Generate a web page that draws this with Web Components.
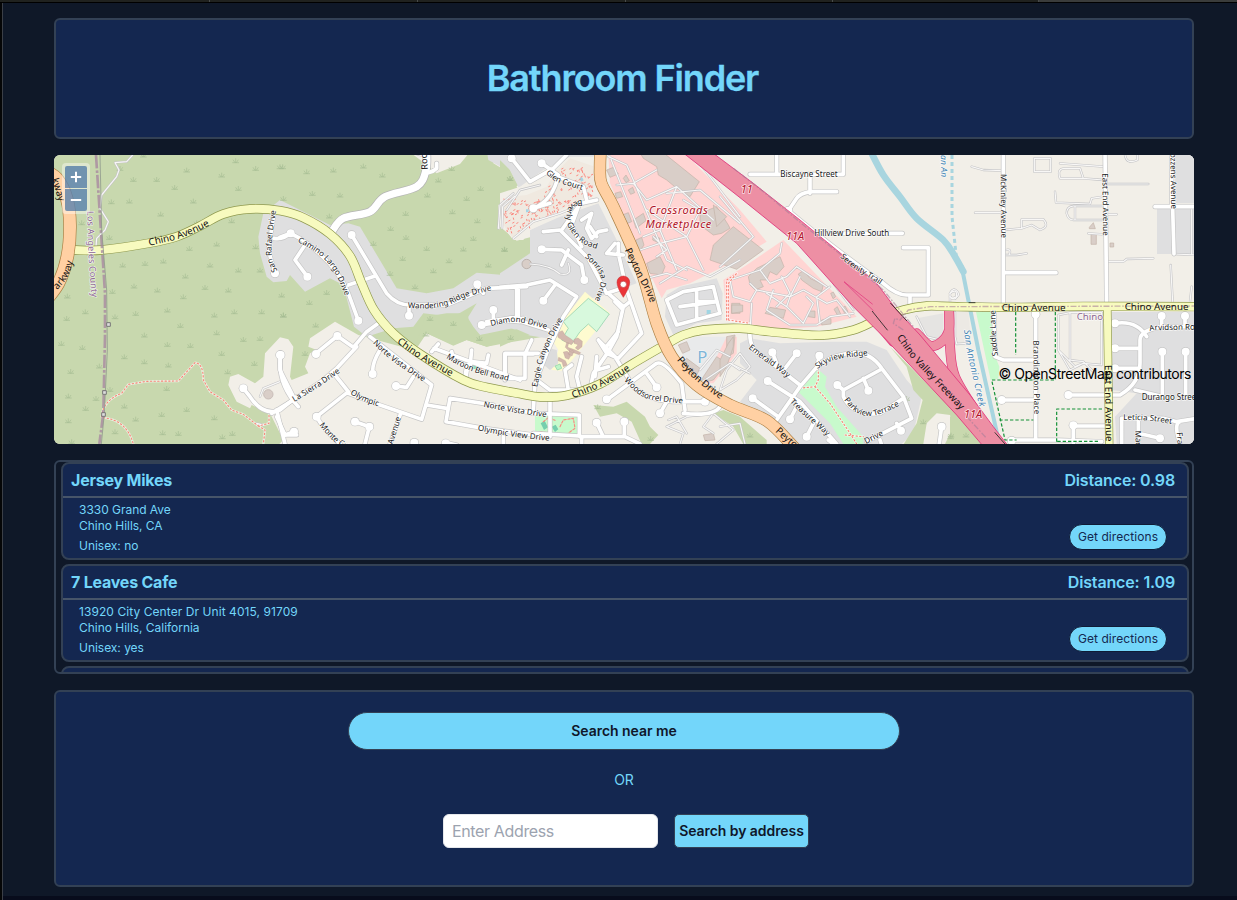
<!DOCTYPE html>
<html lang="en">
<head>
<meta charset="utf-8">
<title>Bathroom Finder</title>
<style>
  html, body { margin: 0; height: 100%; overflow: hidden; }
  body { background: #0f1828; font-family: Inter, sans-serif; color: #73d6fa; }
</style>
</head>
<body>
<finder-app></finder-app>
<script>
const define = (name, html, setup) => customElements.define(name, class extends HTMLElement {
  connectedCallback() {
    if (this.shadowRoot) return;
    const root = this.attachShadow({ mode: 'open' });
    const t = document.createElement('template');
    t.innerHTML = html;
    root.append(t.content.cloneNode(true));
    if (setup) setup(this, root);
  }
});

define('window-frame', `
  <style>
    :host { display: grid; grid-template: 2px 1px 1fr 4px / 2px 1px 1fr; height: 900px; background: #0f1828; }
    .tabs { grid-area: 1/1/2/4; display: grid; grid-template-columns: 210px 208px 208px 207px 206px 1fr; background: #20221f; }
    .tabs i { border-right: 1px solid #484b4a; }
    .tabs i:last-child { background: #3a3c3b; border: 0; }
    .rule { grid-area: 2/1/3/4; background: #000; }
    .left { grid-area: 3/1/5/2; background: #050607; }
    .edge { grid-area: 3/2/5/3; background: #3b3f47; }
    main { grid-area: 3/3/4/4; min-width: 0; }
    .foot { grid-area: 4/3/5/4; background: #080c1c; }
  </style>
  <div class="tabs"><i></i><i></i><i></i><i></i><i></i><i></i></div>
  <div class="rule"></div><div class="left"></div><div class="edge"></div>
  <main><slot></slot></main><div class="foot"></div>`);

define('panel-box', `
  <style>
    :host { display: flex; flex-direction: column; align-items: center; box-sizing: border-box;
      background: #142750; border: 2px solid #334155; border-radius: 6px; }
  </style><slot></slot>`);

define('pill-button', `
  <style>
    :host { display: inline-flex; }
    button { all: unset; box-sizing: border-box; flex: 1; display: flex; align-items: center; justify-content: center;
      background: #73d6fa; color: var(--ink, #0f172a); border: 1px solid var(--line, #334155); border-radius: var(--radius, 18px);
      font: var(--font, 600 14px/20px Inter, sans-serif); letter-spacing: var(--track, 0); white-space: nowrap; }
  </style><button><slot></slot></button>`);

define('place-card', `
  <style>
    :host { display: flex; flex-direction: column; box-sizing: border-box; height: 98px; flex: none;
      border: 2px solid #334155; border-radius: 8px; background: #142750; }
    header { display: flex; justify-content: space-between; height: 32px; padding: 0 12px 0 8px; border-bottom: 2px solid #475569;
      font: 700 16px/33px Inter, sans-serif; letter-spacing: -.22px; }
    header ::slotted([slot=distance]) { font-weight: 600; letter-spacing: -.15px; }
    .body { display: flex; justify-content: space-between; align-items: flex-end; padding: 4px 20px 0 16px; font-size: 12px; line-height: 16px; letter-spacing: -.03px; }
    .unisex { margin-top: 4px; }
    pill-button { width: 98px; height: 26px; margin-bottom: 4px; --ink: #142750; --line: #0f1b36; --radius: 13px; --font: 400 12px/16px Inter, sans-serif; --track: .08px; }
  </style>
  <header><slot name="name"></slot><slot name="distance"></slot></header>
  <div class="body">
    <div><div><slot name="street"></slot></div><div><slot name="city"></slot></div><div class="unisex">Unisex: <slot name="unisex"></slot></div></div>
    <pill-button>Get directions</pill-button>
  </div>`);

define('result-list', `
  <style>
    :host { display: flex; flex-direction: column; gap: 4px; box-sizing: border-box; height: 214px; overflow: hidden;
      padding: 0 3px 0 5px; border: 2px solid #334155; border-radius: 6px; }
  </style><slot></slot>`);

define('search-form', `
  <style>
    :host { display: flex; flex-direction: column; align-items: center; padding-top: 20px; width: 100%; }
    .near { width: 552px; height: 38px; --radius: 19px; --track: -.05px; }
    .or { font-size: 14px; line-height: 20px; margin: 20px 0 24px; }
    .row { display: flex; align-items: center; gap: 16px; margin-left: 4px; }
    input { box-sizing: border-box; width: 215px; height: 34px; margin: 0; padding: 0 8px; background: #fff; border: 1px solid #e5e7eb;
      border-radius: 6px; font: 400 16px/24px Inter, sans-serif; letter-spacing: -.36px; outline: 0; }
    input::placeholder { color: #9ca3af; opacity: 1; }
    .by { width: 135px; height: 34px; --radius: 5px; --track: -.06px; }
  </style>
  <pill-button class="near">Search near me</pill-button>
  <div class="or">OR</div>
  <div class="row"><input placeholder="Enter Address"><pill-button class="by">Search by address</pill-button></div>`);

/* ---------- map drawing: units are thirds of a pixel, grouped by tile column ---------- */
const TILE = { A: 0, B: 690, C: 1350, D: 2010, E: 2700 };
const smooth = str => {
  const p = str.trim().split(/\s+/).map(s => s.split(',').map(Number));
  let d = `M${p[0]}`;
  for (let i = 0; i < p.length - 1; i++) {
    const a = p[i - 1] || p[i], b = p[i], c = p[i + 1], e = p[i + 2] || c;
    d += `C${b[0] + (c[0] - a[0]) / 6},${b[1] + (c[1] - a[1]) / 6} ${c[0] - (e[0] - b[0]) / 6},${c[1] - (e[1] - b[1]) / 6} ${c}`;
  }
  return d;
};
const at = (t, s) => `<g transform="translate(${TILE[t]} 0)">${s}</g>`;
const each = (data, fn) => Object.entries(data).map(([t, v]) => at(t, fn(v))).join('');

const land = {
  A: `<path class="green" d="M0,0H2000V900H0Z"/>`,
  B: `<path class="base" d="M380,0L408,20 432,38 470,70 540,42 560,18 570,0H3000V900H-20L10,870 0,850 -30,790 -85,765 -90,775 -130,755 -155,705 -150,680 -125,672 -75,700 -50,680 -45,610 0,562 25,568 40,590 30,680 35,690 85,670 75,650 90,610 110,600 85,590 90,565 165,515 235,555 400,600 440,550 520,585 560,570 620,590 720,560 760,300 720,290 655,235 655,165 720,130 690,70 640,40V0Z"/>
     <path class="grey" d="M-50,190L-65,260 -60,310 -40,380 -20,397 20,393 30,375 75,425 150,385 190,405 222,530 260,560 340,535 400,530 430,490 520,500 590,460 565,500 565,525 600,555 660,550 720,540 900,400 900,200 820,260 720,340 670,375 590,368 520,415 440,430 350,415 240,230 205,220 150,225 0,150Z"/>
     <path class="green" d="M400,610L435,500 500,490 555,490 580,530 600,555 720,530 790,560 700,575 620,590 560,570 520,587 440,550Z"/>
     <path class="grey" d="M620,0L625,30 690,65 720,120 760,110 940,20 960,0Z"/>`,
  C: `<path class="green" d="M0,30L30,60 55,105 0,140ZM0,230L50,272 90,262 90,310 0,375Z"/>
     <path class="grey" d="M-30,15L20,40 55,110 200,40 215,0H-30ZM90,240L170,200 295,160 350,270 410,400 300,440 240,450 210,500 140,565 80,555 0,520V370L90,310Z"/>
     <path class="base" d="M60,110L130,60 210,20 290,20 295,160 180,200 90,240 70,270 40,270 0,220V130Z"/>
     <path class="park" d="M5,180L30,140 80,135 140,110 165,70 210,25 285,50 285,110 260,140 170,185 90,215 40,265 10,225Z" style="fill:#f0e9e0"/>
     <path class="retail" d="M325,15H560L720,180 800,275 700,335 570,400 500,420 485,445 440,350 400,260 330,100Z"/>
     <path class="retail" d="M670,390L740,345 850,270 1070,500 950,530 810,540 730,515 680,510Z"/>
     <path class="grey" d="M500,435L540,410 650,385 668,430 665,510 590,520 520,555 495,500Z"/>
     <path d="M540,580L590,560 680,560 690,640 620,705 555,640Z" fill="#e9eaeb"/>
     <path class="retail" d="M680,560L710,560 710,610 680,650 640,700 610,700Z"/>
     <path d="M255,425L330,490 285,545 200,650 185,662 155,660 175,600 150,560Z" fill="#fefbd0"/>
     <path d="M265,445L328,492 290,545 265,522 240,545 215,582 185,570 205,535 190,515Z" fill="#d8f9dd" stroke="#86cca6" stroke-width="2"/>
     <path class="green" d="M0,545L50,538 90,555 50,568 0,590ZM280,765L340,770 380,755 435,800 450,830 475,855 450,882H425L395,815 350,790 300,800ZM640,790L670,780 720,800 800,870V900H740L700,830Z"/>
     <path d="M105,798H235V858H105Z" fill="#c8facc"/><path d="M130,590L170,600 175,640 150,660 125,640Z" fill="#dcdcdc"/>
     <path d="M165,648L180,642 185,655 172,660Z" fill="#c0f5c8" stroke="#86cca6" stroke-width="2"/>`,
  D: `<path class="grey" d="M60,580L90,565 180,580 330,575 440,575 500,600 560,690 605,740 580,850 545,882H235L60,755 110,690 60,640Z"/>
     <path class="green" d="M510,590L560,640 720,800 740,820 760,900H540L590,820 608,750 580,720 560,650ZM60,830L110,850 120,882H80Z"/>
     <path class="base" d="M610,882L620,820 650,790 690,795 700,830 675,882Z"/>
     <path class="park" d="M290,655L320,680 315,710 350,770 430,860V882H370L330,820 235,725Z"/>
     <path d="M590,505L670,490V560L640,570 610,560Z" fill="#e5e4e2"/>`,
  E: `<path class="park" d="M78,486H125L132,610 148,650 145,686 122,690Z"/>
     <path class="grey" d="M675,0H740V160H675ZM621,175H740V312H621ZM485,486H740V882H500L495,800 560,730 485,720Z"/>
     <path class="green" d="M0,800L30,790 95,882H0Z"/><path class="grey" d="M0,486H55L62,560 50,586H15Z" style="fill:#ece9e4"/>`
};
const tufts = {
  A: '280,15 210,55 250,88 320,88 410,60 515,75 557,32 617,55 690,50 374,112 565,115 430,153 238,153 184,155 332,192 545,212 440,218 178,262 95,218 418,295 500,282 617,290 340,333 285,340 218,345 406,378 480,345 565,360 630,360 252,408 187,424 322,420 400,440 465,412 535,420 52,438 106,485 50,505 352,480 195,500 257,490 493,495 553,485 635,485 700,495 391,526 283,555 500,548 580,568 630,565 352,583 421,586 515,610 34,580 97,592 223,620 62,664 148,648 283,635 613,640 533,665 355,645 180,718 55,738 107,775 223,768 350,715 138,745 410,778 335,793 493,803 55,812 257,807 195,845 385,850 547,850 338,848 65,875 517,860',
  B: '8,50 80,65 160,60 250,48 307,75 515,55 475,90 602,115 560,145 442,135 97,130 180,135 377,190 517,185 148,198 592,212 332,235 378,262 280,280 440,295 550,297 580,265 673,297 368,325 507,332 460,362 625,345 405,410 330,370 10,145 5,435 88,457 140,427 10,495 107,525 75,610 438,552 520,520 598,565 690,85 450,505',
  C: '14,298 30,85 32,562 293,770 452,865', D: '610,815 692,860 560,745 90,855', E: '3,855 48,855'
};
const buildings = {
  C: 'M415,0L480,0 598,95 570,140 530,115 500,90 475,75 470,50 430,25ZM320,60L340,52 355,72 330,82ZM345,130L362,125 368,140 350,145ZM370,85L378,75 388,92 378,98ZM385,120L398,112 404,128 392,133ZM367,195L385,188 395,215 378,222ZM400,210L430,190 438,212 408,235ZM460,258L480,265 475,278 458,270ZM600,190L650,170 685,225 690,235 665,250 640,255 600,225ZM640,285L700,230 790,300 710,358 630,330ZM440,340L480,320 495,350 485,375 450,370ZM408,270L425,262 432,285 415,310 405,300ZM535,585L560,575 570,600 548,610ZM545,640L560,625 600,655 590,675ZM680,560L705,555 700,610 680,620ZM630,650L650,620 680,640 640,690 600,700 610,680ZM695,460H720V490H695ZM610,855L640,850 645,870 615,872Z',
  D: 'M-20,165L20,200 -10,230ZM85,380L110,355 150,335 180,320 192,350 170,375 150,365 140,390 120,390 130,410 105,420 90,405ZM235,372L250,362 270,385 310,405 305,425 280,415 245,390ZM135,490L150,472 197,480 190,505ZM35,465H68V485L35,490ZM265,483H285V503L265,500ZM305,510L333,506V522L305,525ZM332,430L340,426 347,440 339,446ZM342,478L352,470 362,492 354,498ZM366,475L375,468 384,485 374,490ZM0,630L25,580 40,560V590L20,650 0,680Z',
  E: 'M418,232L430,218 436,236H418ZM423,253H439V283H423ZM480,279H491V291H480Z'
};
const school = 'M172,548L187,542 196,556 212,566 222,574 214,584 196,576 174,562ZM222,568L234,564 247,574 246,590 234,600 226,594 234,584 222,580ZM200,578L206,578 203,592 226,600 242,608 238,614 208,604 196,592ZM210,598L222,604 216,618 204,612ZM190,606L202,604 212,618 206,628 196,624ZM176,622L196,632 202,646 190,650 186,636 174,632Z';
const service = {
  A: 'M248,15L230,35 195,38 207,60 200,80 155,135 150,175 175,215 165,240 140,265 138,290M620,820L640,825',
  B: 'M0,695L-50,715 -60,740M655,235L660,165 700,130M666,235L668,170 705,138',
  C: 'M90,342Q150,345 180,372Q220,380 205,340M325,20L380,45 400,90 500,330 560,360M350,105L400,100 440,150 530,110 640,210M470,60L400,100M530,110L480,240 530,360M600,40L720,200M440,180L560,260 600,180 550,150M420,300L480,280 560,260 610,360M480,240L430,260M500,130L600,120 720,220M420,390L500,370 560,390M480,400L560,350 630,380 720,330M460,260L500,300 470,320M500,830L560,800 640,790 700,840 650,882M540,882L550,850 500,830M600,700L690,640 720,660M640,790L610,830 640,850M600,660L650,600 690,620M505,810L530,800 560,850M650,60L740,150M330,20L420,250M20,180L60,120 120,105M40,265L100,215 180,190 255,160',
  D: 'M0,140L100,260 0,350M30,390L120,360 180,310 185,280M30,390L40,440 90,455 110,420 90,400M110,420L210,440 250,420 320,460 350,450M120,360L150,400 200,380 230,350 320,410M200,470L210,440 240,380M200,470L250,520 280,460 260,440M160,420L140,480 210,525H290L330,500 400,490M90,545L95,460M350,450L390,500M300,520L290,440 330,410M340,400L400,480M200,470L140,430M0,720L50,690 90,650 60,610 20,660ZM30,640L90,670M0,830L60,820 75,882M185,380L210,430 170,470M690,460L690,430Q700,410 712,425T695,445M590,500L620,560 660,570',
  E: 'M65,50L100,60 155,62M75,188H155M165,240L215,235V208L280,208Q300,230 270,240L245,225 215,235M165,315H200L230,310M168,300Q185,295 178,315M253,25H302V65H253ZM330,40L460,50M330,85Q320,55 345,55L390,55 400,85 460,90M330,85H400M475,102H595M315,125L318,158 420,162 425,145 460,140M350,190Q350,170 370,168H460M350,190Q355,210 370,210H460M375,168V210M475,193H500M415,250L460,253M475,335L520,335 530,327 610,325M662,345L668,455M725,410L720,455M670,312L740,315M725,175V312M325,495L360,488H455V645L400,640 375,650 325,600ZM360,488V630M325,600L360,660 400,640M525,15Q530,45 562,30V0M0,430Q20,415 20,435T0,440M15,486V560L20,582 50,580M355,630L400,635 430,665M0,700V560'
};
const roads = {
  A: 'M675,370L655,300 672,190M672,265Q700,270 722,248M580,715L600,740Q640,800 690,780L740,740M692,615Q680,700 745,770M680,780L705,882M705,855H740',
  B: 'M0,262L32,250 60,265Q170,340 205,430L235,512M75,285L45,330 82,380M205,405L285,378M215,255L320,430Q350,465 390,465L500,465 620,415 740,410M387,497V465M592,405L610,430M715,410V500L620,515M640,480V515M605,525L730,505M108,610L172,558 220,592 260,545 292,522M-25,790L40,750 130,690 170,655 230,590M0,615V660L40,740M165,675L205,725 110,800Q130,840 200,900M205,730L300,765 425,808 455,705 270,560M300,600Q275,640 278,672M348,708L380,712 400,680M440,765L500,775M640,765L510,745 498,815 610,835 800,860M225,815L268,830 255,882M362,790L330,882M-10,800L15,855 42,845M470,40V55Q460,65 445,68M380,0L435,15M455,605L475,582M462,595L720,690M575,600L570,650 M558,680L565,640M575,635L620,640 625,615M515,605L520,625M555,680L560,650M675,690V612H760M810,740V860M403,875V900M497,878L530,885M670,860V900',
  C: 'M35,25L90,95 160,55 200,15M125,40L175,75Q160,150 100,175M145,70L250,110 260,150M100,175L150,160M245,160L290,150M185,240L235,170 215,225 245,290M130,245L180,240 265,325 320,430 380,410M125,298L185,300 245,345 253,390M185,345L205,300M325,430L370,470 350,560 325,605M245,210L275,190 260,235 275,265 295,245 320,240M270,230L290,260M0,412L80,405 150,390 230,440 190,500 140,610 105,700 100,780M165,405L130,452M50,410V510L145,540M0,510L60,515M345,280L320,310 370,315M355,280V310L380,420 425,550 355,625 320,610 295,570M295,570L345,620 400,710Q450,760 560,755H615M390,455L365,475 345,455M355,545L315,595M15,610H115M15,610V685H75M75,685V612L95,570M110,690L150,720H270L280,670 325,605M205,720L195,660 215,645M240,720L230,680 245,620M285,680L290,620M320,750L470,640Q490,630 545,700L555,780M440,670L470,712M480,790L500,755M550,790Q640,800 660,770M325,650L290,660M0,770L100,790 238,795V858L100,850M240,860L375,860 420,882M290,818L310,860M373,815V860M550,425L640,410 660,490 530,525 500,450 550,425M590,420V505M590,455H650M540,470L650,455M245,862V900',
  D: 'M90,73H370V0M170,0V73M270,73V130M350,125L270,125Q240,130 230,145L205,182M205,182Q360,310 490,400Q530,435 560,435H625V293H550M290,250H547M570,435V460M90,540Q85,600 130,620L240,705M157,607L170,640M230,610L195,655M298,617L290,655M170,810L240,710 300,640Q430,570 485,655L550,740 575,805 440,875M143,693L240,755 350,882M98,745L175,800M210,808L235,760M260,860L280,820M352,705L370,720 480,660M370,720V740Q400,800 480,790L550,745M430,685L445,720M543,842L530,820M480,870L490,900M665,830L655,900M325,870L340,882',
  E: 'M160,0V460M165,368H318M465,0L470,470M665,0V170M615,170H740M668,175L672,312M257,490L257,870M132,486L135,620 160,630H250M155,750H255M185,870H320L455,875M355,735H510Q570,700 570,640V570Q570,540 640,530H740M495,520Q560,510 590,560M495,595H568M495,655H570M555,720L640,740M637,605V740M707,605V740M635,498V530M705,498V530M370,828H465M370,828V900M515,900V805H640L680,815 740,805M565,810V870M690,815Q670,820 690,882M565,850L630,865'
};
const culs = { A: '675,370 580,715 692,615', B: '215,255 387,497 592,403 640,480 605,525 82,380 235,512 32,250 172,558 108,612 0,615 278,672 348,708 225,815 268,830 110,800 42,845 403,878 497,880', C: '35,25 125,40 100,175 130,452 253,390 320,748 470,712 480,790 615,755 290,818 373,815 125,298', D: '205,182 157,607 230,610 298,617 143,693 98,745 352,705 445,722 210,808 260,860 543,842 665,830', E: '257,493 495,520 495,595 495,655 155,750 355,735 185,872 637,605 707,605 635,498 705,498 370,826 630,865' };
const chino = smooth('75,300 155,300 300,279 380,260 450,228 520,192 600,177 690,182 760,203 840,252 900,318 935,400 972,480 1030,550 1110,612 1240,690 1310,712 1410,731 1470,741 1550,736 1650,702 1750,640 1850,582 1900,555 1960,540 2070,535 2160,545 2310,556 2410,540 2480,510 2560,480 2630,468 2720,470 2900,472 3100,469 3460,470');
const peyton = smooth('1652,0 1650,50 1654,100 1690,170 1770,350 1820,520 1865,620 1940,705 2040,765 2150,812 2230,890');
const parkway = smooth('-20,60 20,85 50,145 60,225 52,320 25,400 -20,460');
const endAve = 'M3172,480L3178,900';
const rock = smooth('845,245 880,205 960,185 1005,140 1100,110 1128,60 1130,0');
const motorway = 'M545,5L640,10 720,70 760,100 900,210 1010,300 1130,400 1190,480 1260,555 1410,735 1480,830 1530,895H1455L1370,795 1150,560 1060,470 890,280 720,143Z';
const ramps = smooth('2600,550 2640,587 2675,575 2697,540 2697,480') + smooth('2697,480 2700,590 2715,680 2780,790') + smooth('2380,400 2450,480 2530,575');
const dots = { A: 'M155,800Q160,750 215,730L235,703 290,694 385,693 435,638Q460,640 460,690L480,725 520,750 545,780 580,793 625,828 657,820V790M160,803Q230,810 250,882M625,828L645,840 640,882', C: 'M680,510L680,390 710,370', D: 'M25,510V400L50,370M25,510L90,520M295,655V690L285,710 235,715M285,710L330,760 390,850 410,882M375,855L430,860' };
const cemeteryDots = (() => { let s = '', n = 11; const r = () => (n = (n * 16807) % 2147483647) / 2147483647;
  for (let i = 0; i < 200; i++) { const x = 12 + r() * 265, lo = x < 130 ? 145 : x < 170 ? 110 : 55, hi = x < 90 ? 248 : 235 - (x - 60) * .45;
    const y = lo + r() * (hi - lo), a = r() > .5; s += `M${x.toFixed()},${y.toFixed()}l${a ? 4 : 1},${a ? -2 : 4}`; } return s; })();

let uid = 0;
const curve = (t, pts, txt, cls = '', extra = '') => { const id = 'l' + uid++;
  return at(t, `<path id="${id}" d="${smooth(pts)}" fill="none"/><text class="${cls}" ${extra}><textPath href="#${id}">${txt}</textPath></text>`); };
const label = (t, x, y, txt, cls, extra = '') => at(t, `<text x="${x}" y="${y}" class="${cls}" ${extra}>${txt}</text>`);

const labels = () => [
  curve('A', '298,287 380,268 440,245 520,205', 'Chino Avenue', 'big'),
  curve('A', '22,420 50,385 66,345 72,300', 'arkway', 'big'),
  curve('A', '5,88 15,118 24,148 40,195', 'kway', 'big'),
  curve('A', '112,183 115,300 120,380 128,480', 'Los Angeles County', 'county', 'style="letter-spacing:.6px;font-size:27px"'),
  curve('A', '682,362 666,320 668,250 684,150', 'San Rafael Drive'),
  curve('B', '53,275 115,312 160,360 188,420 200,450', 'Camino Largo Drive'),
  curve('B', '443,58 440,0', 'Rock', 'mid'),
  curve('B', '383,474 450,475 510,463 560,440 660,415', 'Wandering Ridge Drive'),
  curve('B', '633,528 700,516 760,526 860,555', 'Diamond Drive'),
  curve('B', '350,578 420,627 550,700', 'Chino Avenue', 'big'),
  curve('B', '278,580 340,635 445,705', 'Norte Vista Drive'),
  curve('B', '498,624 545,650 610,675 720,700', 'Maroon Bell Road'),
  curve('B', '43,756 110,715 190,660', 'La Sierra Drive'),
  curve('B', '210,732 260,758 320,775', 'Olympic'),
  curve('B', '118,826 160,872 220,910', 'Monte Cristo'),
  curve('B', '338,884 350,845 370,780', 'Avenue'),
  curve('B', '610,770 700,787 860,810', 'Norte Vista Drive'),
  curve('B', '593,841 700,860 860,878', 'Olympic View Drive'),
  curve('C', '137,70 170,95 250,122', 'Glen Court'),
  curve('C', '246,150 222,156 203,178 200,212 214,246 255,284 335,308', 'Beverly Glen Road', '', 'style="letter-spacing:.9px"'),
  curve('C', '254,322 284,350 302,382 298,412 284,452', 'Sonrisa Drive'),
  curve('C', '374,300 410,375 440,430 460,490', 'Peyton Drive', 'big'),
  curve('C', '530,630 575,680 650,740 700,770', 'Peyton Drive', 'big'),
  curve('C', '112,712 130,630 160,560 200,490', 'Eagle Canyon Drive'),
  curve('C', '220,745 300,712 350,685 420,640', 'Chino Avenue', 'big'),
  curve('C', '372,692 420,735 470,752 580,763', 'Woodsorrel Drive'),
  label('C', 535, 193, 'Crossroads', 'shop', 'text-anchor="middle" textLength="176"'),
  label('C', 535, 235, 'Marketplace', 'shop', 'text-anchor="middle" textLength="197"'),
  label('C', 592, 640, 'P', '', 'style="font-size:50px;fill:#7fb5d8;stroke:#fff8"'),
  label('D', 181, 82, 'Biscayne Street', ''),
  label('D', 283, 259, 'Hillview Drive South', ''),
  label('D', 62, 129, '11', 'exit'), label('D', 198, 270, '11A', 'exit'), label('E', 42, 803, '11A', 'exit'),
  curve('D', '360,322 400,355 450,385 520,430', 'Serenity Trail'),
  curve('D', '530,562 580,630 650,705 740,800', 'Chino Valley Freeway', 'big'),
  curve('D', '85,595 130,630 180,665 240,720', 'Emerald Way'),
  curve('D', '292,657 350,628 470,613', 'Skyview Ridge'),
  curve('D', '372,750 405,785 450,798 500,785 560,755', 'Parkview Terrace'),
  curve('D', '209,756 250,795 310,848 350,890', 'Treasure Way'),
  curve('D', '438,882 500,850', 'Drive'),
  curve('D', '165,845 210,885 250,910', 'Peyton', 'big'),
  curve('D', '662,2 663,78', 'San An', 'river'),
  curve('E', '42,540 50,600 70,690 95,800', 'San Antonio Creek', 'river', 'style="font-size:28px;letter-spacing:.6px"'),
  curve('E', '152,72 154,300', 'McKinley Avenue'),
  curve('E', '457,70 460,300', 'East End Avenue'),
  curve('E', '661,-6 664,200', 'Cozzens Avenue'),
  curve('E', '250,572 253,830', 'Brandington Place', '', 'style="letter-spacing:.8px"'),
  curve('E', '144,617 138,560 136,470', 'Saddle Lane'),
  curve('E', '464,645 468,900', 'East End Avenue', 'big'),
  label('E', 155, 483, 'Chino Avenue', 'big'), label('E', 524, 480, 'Chino Avenue', 'big'),
  label('E', 380, 509, 'Chino', 'county', 'style="font-size:29px"'),
  curve('E', '601,546 640,540 900,540', 'Arvidson Road'),
  label('E', 575, 750, 'Durango Street', ''), curve('E', '520,810 600,812 680,825', 'Leticia Street'),
  curve('E', '556,842 560,980', 'Mar Vista'), curve('E', '680,848 690,980', 'Francis'),
].join('');

const mapSvg = () => `<svg viewBox="12 15 3420 867" width="1140" height="289" preserveAspectRatio="none">
  <style>
    .base{fill:#f2efe8}.green{fill:#c8d8ae}.grey{fill:#dfdfe0}.retail{fill:#ffd5d3}.park{fill:#c8facc}
    path,polyline{stroke-linejoin:round}
    .l{fill:none;stroke-linecap:round}
    text{font:24px "Noto Sans",sans-serif;fill:#1a1a1a;stroke:#fffb;stroke-width:4px;paint-order:stroke;stroke-linejoin:round}
    text.big{font-size:29.5px;stroke:none;fill:#111} text.mid{font-size:27px}
    text.county{font-size:26px;fill:#8d6693} text.river{font-size:26px;font-style:italic;fill:#4385b5}
    text.shop{font-size:33px;font-style:italic;fill:#b01227;stroke-width:5px}
    text.exit{font-size:33px;font-style:italic;fill:#b4122c;stroke-width:5px}
  </style>
  <rect x="0" width="3460" height="900" class="base"/>
  ${each(land, v => v)}
  ${each(tufts, v => v.split(' ').map(p => `<path d="M${p}m-10,6h20m-10,0v-13m-2,13l-6,-9m10,9l6,-9" fill="none" stroke="#a3bb90" stroke-width="1.8"/>`).join(''))}
  ${each(buildings, d => `<path d="${d}" fill="#d9cec8" stroke="#c3b2a8" stroke-width="2"/>`)}
  ${at('C', `<path d="${school}" fill="#d3b8ae" stroke="#b99c92" stroke-width="1"/><circle cx="80" cy="342" r="14" fill="#d9cec8" stroke="#bdb3ae" stroke-width="3"/>
     <path d="M122,820l12,-8 10,20 -12,8ZM155,830l12,-6 8,14 -10,8Z" fill="#76cfae"/><path d="M620,480h12v12h-12Z" fill="#9fd5e3"/><path d="M238,85l8,-4 5,10 -8,4ZM78,178h8v9h-8Z" fill="#a5d5e5"/>
     <path d="${cemeteryDots}" class="l" stroke="#fa8a80" stroke-width="3"/><path d="M130,815l15,-12 20,8M180,830l10,-20 30,-5 5,30 -25,18M120,845l50,8" class="l" stroke="#fa8a80" stroke-width="3.5" stroke-dasharray="7 5"/>`)}
  ${at('A', '<circle cx="655" cy="733" r="14" fill="#d9cec8" stroke="#c9beb9" stroke-width="3"/>')}
  ${at('B', '<path d="M575,637h15v20h-15Z" fill="#8fdcc0"/><path d="M585,645l25,-5 5,10 -15,8" class="l" stroke="#f58d88" stroke-width="4" stroke-dasharray="4 3"/>')}
  <path d="${smooth('2460,0 2500,75 2550,140 2600,205 2680,270 2715,320 2740,365')}" class="l" stroke="#a8d5df" stroke-width="20"/>
  <path d="M2735,350L2785,600 2850,890" class="l" stroke="#a8d5df" stroke-width="12"/>
  <path d="M2706,15V200L2720,330" fill="none" stroke="#a8d5df" stroke-width="9" stroke-dasharray="12 9"/>
  ${each(service, d => `<path d="${d}" class="l" stroke="#c3c3c5" stroke-width="7"/>`)}
  ${each(service, d => `<path d="${d}" class="l" stroke="#f8f7f6" stroke-width="3.6"/>`)}
  ${each(dots, d => `<path d="${d}" class="l" stroke="#fff9" stroke-width="7"/><path d="${d}" class="l" stroke="#f98678" stroke-width="3.4" stroke-dasharray="4 7"/>`)}
  ${each(roads, d => `<path d="${d}" class="l" stroke="#c6c6c6" stroke-width="15"/>`)}
  ${each(culs, v => v.split(' ').map(p => `<circle cx="${p.split(',')[0]}" cy="${p.split(',')[1]}" r="14" fill="#c6c6c6"/>`).join(''))}
  <path d="${rock}" class="l" stroke="#b5b5b5" stroke-width="26"/>
  ${each(roads, d => `<path d="${d}" class="l" stroke="#fff" stroke-width="11"/>`)}
  ${each(culs, v => v.split(' ').map(p => `<circle cx="${p.split(',')[0]}" cy="${p.split(',')[1]}" r="12" fill="#fff"/>`).join(''))}
  <path d="${rock}" class="l" stroke="#fff" stroke-width="22"/>
  ${at('E', '<path d="M197,486V615M316,486V690H125L165,870H200M148,810H250M320,875V777H460M322,874H445" fill="none" stroke="#159237" stroke-width="3.6" stroke-dasharray="10 6"/>')}
  <path d="${ramps}" class="l" stroke="#e03a7b" stroke-width="30"/><path d="${ramps}" class="l" stroke="#ed8fa4" stroke-width="26"/>
  <path d="${endAve}" class="l" stroke="#8f994e" stroke-width="25"/><path d="${chino}" class="l" stroke="#8f994e" stroke-width="28"/>
  <path d="${endAve}" class="l" stroke="#f7fabf" stroke-width="21"/><path d="${chino}" class="l" stroke="#f7fabf" stroke-width="24"/>
  ${at('C', `<path d="${motorway}" fill="#ed8fa4" stroke="#e0317a" stroke-width="2.5"/>`)}
  <path d="M2383,396L2470,482M2383,396L2467,462" class="l" stroke="#e0317a" stroke-width="2"/>
  <path d="M2467,484L2512,540M2522,460L2570,512M2835,848L2865,882M2757,458H2775" class="l" stroke="#222" stroke-width="2.5"/>
  <path d="${peyton}" class="l" stroke="#ad8045" stroke-width="37"/><path d="${parkway}" class="l" stroke="#ad8045" stroke-width="40"/>
  <path d="${peyton}" class="l" stroke="#ffd0a3" stroke-width="33"/><path d="${parkway}" class="l" stroke="#ffd0a3" stroke-width="36"/>
  <path d="M2050,55L2140,125 2260,225 2380,320 2500,420 2590,530M2560,540L2530,520 2535,505 2550,510 2575,480 2640,470 3432,468M2750,800L2810,865" fill="none" stroke="#a97f99" stroke-opacity=".6" stroke-width="4" stroke-dasharray="18 5 5 5"/>
  <path d="M138,15L150,200 165,430 165,560 160,790 148,882" fill="none" stroke="#a98aa0" stroke-opacity=".8" stroke-width="8" stroke-dasharray="40 6 8 6"/>
  <path d="M150,15L155,240 170,420 172,600 163,790 154,882" fill="none" stroke="#929b8e" stroke-width="2.5"/>
  <path d="M170,518h11v11h-11ZM158,722h11v11h-11ZM155,788h11v11h-11Z" fill="#ddd" stroke="#777" stroke-width="3"/>
  ${labels()}
  <path d="M1720,442Q1701,413 1701,397A19,19 0 0 1 1739,397Q1739,413 1720,442Z" fill="#ea3539" stroke="#c9282d" stroke-width="1.5"/><circle cx="1720" cy="403" r="9.5" fill="#fff" stroke="#b9444a" stroke-width="2"/>
</svg>`;

define('street-map', `
  <style>
    :host { display: block; position: relative; height: 289px; border-radius: 6px; overflow: hidden; }
    svg { display: block; }
    .zoom { position: absolute; left: 8px; top: 8px; display: grid; gap: 1px; padding: 3px; border-radius: 4px; background: #fff6; }
    .zoom span { width: 22px; height: 22px; background: rgba(60,108,160,.68); display: grid; place-items: center; }
    .zoom span:first-child { border-radius: 2px 2px 0 0; } .zoom span:last-child { border-radius: 0 0 2px 2px; }
    .credit { position: absolute; right: 3px; bottom: 60px; font: 400 14px/20px Inter, sans-serif; letter-spacing: -.46px; color: #000; white-space: nowrap; }
  </style>
  ${mapSvg()}
  <div class="zoom"><span><svg width="12" height="12"><path d="M6,.8V11.2M.8,6H11.2" stroke="#fff" stroke-width="2"/></svg></span><span><svg width="12" height="12"><path d="M.8,6H11.2" stroke="#fff" stroke-width="2"/></svg></span></div>
  <div class="credit">© OpenStreetMap contributors</div>`);

define('finder-app', `
  <style>
    :host { display: block; }
    .page { display: grid; grid-template-rows: 121px 289px 214px 197px; gap: 16px; padding: 15px 43px 0 51px; }
    h1 { margin: 0; font: 600 36px/40px Inter, sans-serif; letter-spacing: -1.15px; padding-top: 38px; margin-left: -3px; -webkit-text-stroke: .3px currentColor; }
  </style>
  <window-frame><div class="page">
    <panel-box><h1>Bathroom Finder</h1></panel-box>
    <street-map></street-map>
    <result-list>
      <place-card><span slot="name">Jersey Mikes</span><span slot="distance">Distance: 0.98</span><span slot="street">3330 Grand Ave</span><span slot="city">Chino Hills, CA</span><span slot="unisex">no</span></place-card>
      <place-card><span slot="name">7 Leaves Cafe</span><span slot="distance">Distance: 1.09</span><span slot="street" style="letter-spacing:.07px">13920 City Center Dr Unit 4015, 91709</span><span slot="city">Chino Hills, California</span><span slot="unisex">yes</span></place-card>
      <panel-box style="height:98px;flex:none;border-radius:8px"></panel-box>
    </result-list>
    <panel-box><search-form></search-form></panel-box>
  </div></window-frame>`);
</script>
</body>
</html>
